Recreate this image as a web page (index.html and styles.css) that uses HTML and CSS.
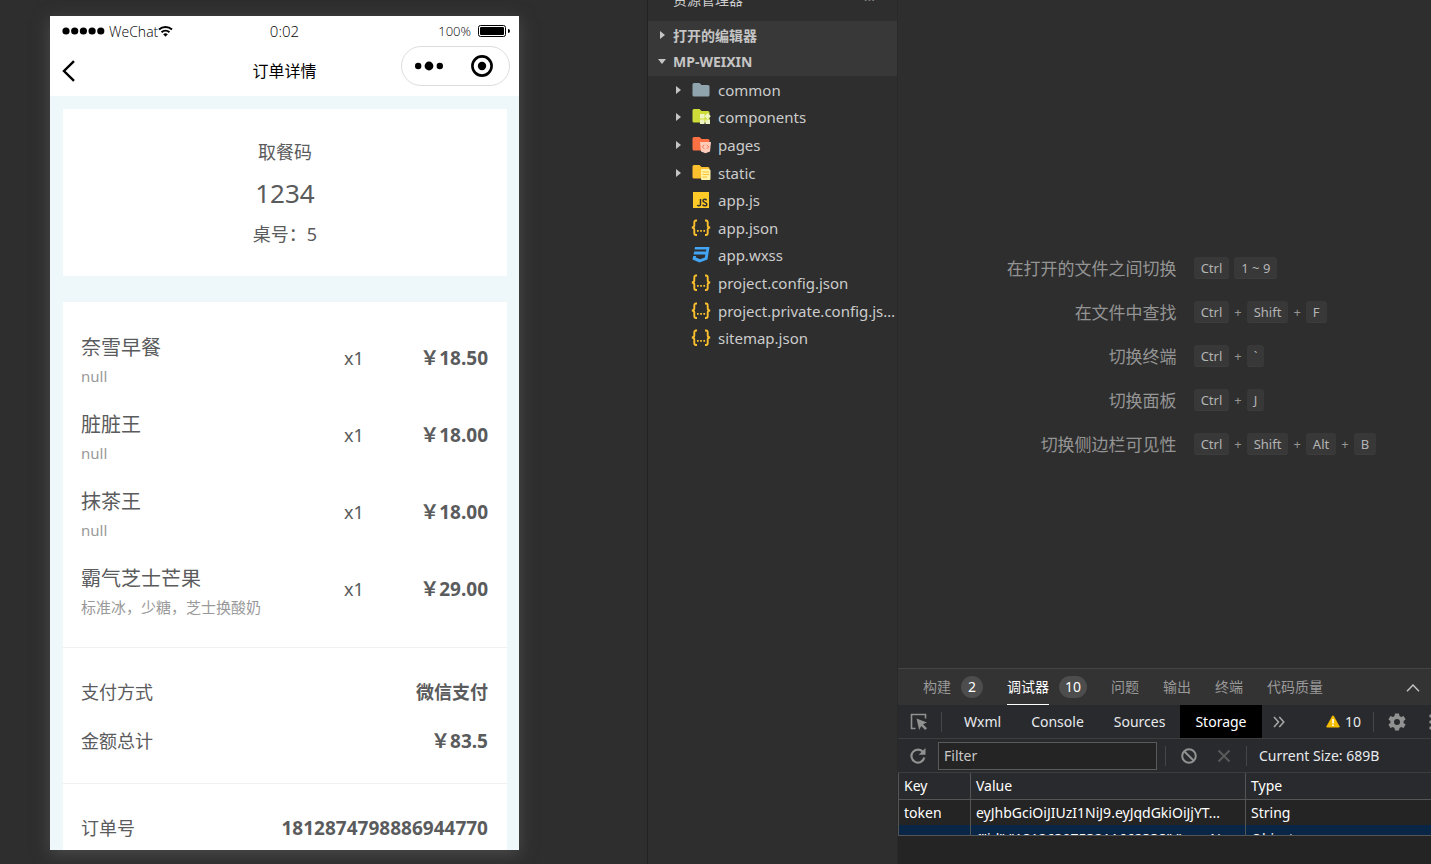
FILE: index.html
```html
<!DOCTYPE html>
<html lang="zh-CN">
<head>
    <meta charset="UTF-8">
    <meta name="viewport" content="width=device-width, initial-scale=1.0">
    <title>订单详情</title>
    <link rel="stylesheet" href="styles.css">
</head>
<body>
    <!-- 模拟器 -->
    <section class="simulator">
        <div class="phone">
            <div class="status-bar">
                <div class="carrier">
                    <svg class="signal" width="43" height="8" viewBox="0 0 43 8"><circle cx="4" cy="4" r="3.600"/><circle cx="12.700" cy="4" r="3.600"/><circle cx="21.400" cy="4" r="3.600"/><circle cx="30.100" cy="4" r="3.600"/><circle cx="38.800" cy="4" r="3.600"/></svg>
                    <span>WeChat</span>
                    <svg width="15" height="12" viewBox="0 0 15 12" fill="none" stroke="#000" stroke-width="2"><path d="M1 4.5a9.5 9.5 0 0 1 13 0M3.5 7.3a6 6 0 0 1 8 0"/><path d="M5.2 9.2a3.6 3.6 0 0 1 4.6 0L7.5 11.8z" fill="#000" stroke="none"/></svg>
                </div>
                <div class="clock">0:02</div>
                <div class="battery">
                    <span>100%</span>
                    <svg width="32" height="12" viewBox="0 0 32 12"><rect x=".5" y=".5" width="27" height="11" rx="2" fill="none" stroke="#000"/><rect x="2" y="2" width="24" height="8" rx="1"/><path d="M30 4q2 0 2 2t-2 2z"/></svg>
                </div>
            </div>
            <div class="nav-bar">
                <button class="back" aria-label="返回">
                    <svg width="14" height="22" viewBox="0 0 14 22" fill="none" stroke="#000" stroke-width="2.4"><path d="M12 1.2L2 11l10 9.8"/></svg>
                </button>
                <h1>订单详情</h1>
                <div class="capsule">
                    <button aria-label="更多">
                        <svg width="28" height="10" viewBox="0 0 28 10"><circle cx="3.2" cy="5" r="3.2"/><circle cx="14" cy="5" r="4.4"/><circle cx="24.8" cy="5" r="3.2"/></svg>
                    </button>
                    <button aria-label="关闭">
                        <svg width="22" height="22" viewBox="0 0 22 22"><circle cx="11" cy="11" r="9.6" fill="none" stroke="#000" stroke-width="2.6"/><circle cx="11" cy="11" r="4.2"/></svg>
                    </button>
                </div>
            </div>
            <div class="page">
                <div class="card pickup">
                    <p>取餐码</p>
                    <p class="code">1234</p>
                    <p>桌号：5</p>
                </div>
                <div class="card order">
                    <div class="group goods">
                        <div class="item">
                            <div><div class="name">奈雪早餐</div><div class="spec">null</div></div>
                            <span>x1</span><b class="num">￥18.50</b>
                        </div>
                        <div class="item">
                            <div><div class="name">脏脏王</div><div class="spec">null</div></div>
                            <span>x1</span><b class="num">￥18.00</b>
                        </div>
                        <div class="item">
                            <div><div class="name">抹茶王</div><div class="spec">null</div></div>
                            <span>x1</span><b class="num">￥18.00</b>
                        </div>
                        <div class="item">
                            <div><div class="name">霸气芝士芒果</div><div class="spec">标准冰，少糖，芝士换酸奶</div></div>
                            <span>x1</span><b class="num">￥29.00</b>
                        </div>
                    </div>
                    <div class="group">
                        <div class="row"><span>支付方式</span><b>微信支付</b></div>
                        <div class="row"><span>金额总计</span><b class="num">￥83.5</b></div>
                    </div>
                    <div class="group">
                        <div class="row"><span>订单号</span><b class="num">1812874798886944770</b></div>
                    </div>
                </div>
            </div>
        </div>
    </section>

    <!-- 资源管理器 -->
    <aside class="explorer">
        <div class="explorer-title"><span>资源管理器</span><span class="more">···</span></div>
        <div class="explorer-sections">
            <div class="section"><i class="arrow"></i>打开的编辑器</div>
            <div class="section"><i class="arrow open"></i>MP-WEIXIN</div>
        </div>
        <ul class="tree">
            <li><i class="arrow"></i><svg viewBox="0 0 20 18"><path d="M3 2h5.500l2 2H17q1.500 0 1.500 1.500V14q0 1.500-1.500 1.500H3Q1.500 15.500 1.500 14V3.500Q1.500 2 3 2z" fill="#90a4ae"/></svg><span>common</span></li>
            <li><i class="arrow"></i><svg viewBox="0 0 20 18"><path d="M3 1h5.500l2 2H17q1.500 0 1.500 1.500V13q0 1.500-1.500 1.500H3Q1.500 14.500 1.500 13V2.500Q1.500 1 3 1z" fill="#cddc39"/><path d="M9 6h4.500v4.500H9zM9 11.500h4.500V16H9zM14.500 11.500H19V16h-4.500zM16.700 5l3.100 3.200-3.100 3.100-3.100-3.100z" fill="#f0f4c3"/></svg><span>components</span></li>
            <li><i class="arrow"></i><svg viewBox="0 0 20 18"><path d="M3 1h5.500l2 2H17q1.500 0 1.500 1.500V13q0 1.500-1.500 1.500H3Q1.500 14.500 1.500 13V2.500Q1.500 1 3 1z" fill="#ff7043"/><path d="M9 6h11l-1 9.500-4.500 1.800L10 15.500z" fill="#ffccbc"/><path d="M13.300 8.800l-2 2 2 2M15.700 8.800l2 2-2 2" fill="none" stroke="#ff7043"/></svg><span>pages</span></li>
            <li><i class="arrow"></i><svg viewBox="0 0 20 18"><path d="M3 1h5.500l2 2H17q1.500 0 1.500 1.500V13q0 1.500-1.500 1.500H3Q1.500 14.500 1.500 13V2.500Q1.500 1 3 1z" fill="#fbc02d"/><path d="M11 5h7l1.500 1.500V15q0 1-1 1H11q-1 0-1-1V6q0-1 1-1z" fill="#fff3a8"/><path d="M11.500 8h6.500M11.500 10.500h6.500M11.500 13h4.500" stroke="#fbc02d"/></svg><span>static</span></li>
            <li><i class="arrow hidden"></i><svg viewBox="0 0 20 18"><path d="M2 1h16v16H2z" fill="#ffca28"/><path d="M9.500 8v5.200q0 1.600-1.500 1.600-1.100 0-1.600-1M15.500 9.300q-.5-1-1.800-1-1.700 0-1.700 1.500 0 1.100 1.800 1.600 2 .5 2 1.800 0 1.600-2 1.600-1.600 0-2.200-1.200" fill="none" stroke="#2e2e2e" stroke-width="1.500"/></svg><span>app.js</span></li>
            <li><i class="arrow hidden"></i><svg viewBox="0 0 20 18"><use href="#json"/></svg><span>app.json</span></li>
            <li><i class="arrow hidden"></i><svg viewBox="0 0 20 18"><path d="M4 1h14.500l-2 12.500L8.500 16.500 1.500 13.500l.7-3.500h3l-.3 1.600 4.200 1.700 4.700-1.700.6-3.100H2.600l.6-3H15l.3-2H3.500z" fill="#42a5f5"/></svg><span>app.wxss</span></li>
            <li><i class="arrow hidden"></i><svg viewBox="0 0 20 18"><use href="#json"/></svg><span>project.config.json</span></li>
            <li><i class="arrow hidden"></i><svg viewBox="0 0 20 18"><use href="#json"/></svg><span>project.private.config.json</span></li>
            <li><i class="arrow hidden"></i><svg viewBox="0 0 20 18"><use href="#json"/></svg><span>sitemap.json</span></li>
        </ul>
        <svg class="defs">
            <symbol id="json" viewBox="0 0 20 18"><path d="M6 1.500H5Q3.300 1.500 3.300 3.500V6.500Q3.300 8.500.8 8.500q2.500 0 2.500 2V14q0 2 1.700 2h1M14 1.500h1q1.700 0 1.700 2v3q0 2 2.500 2-2.500 0-2.500 2V14q0 2-1.700 2h-1" fill="none" stroke="#fbc02d" stroke-width="1.900"/><path d="M6 11h1.700v1.700H6zM9.200 11h1.700v1.700H9.200zM12.400 11h1.700v1.700h-1.700z" fill="#fbc02d"/></symbol>
        </svg>
    </aside>

    <!-- 编辑区 -->
    <main class="editor">
        <dl class="hints">
            <dt>在打开的文件之间切换</dt>
            <dd><kbd>Ctrl</kbd><kbd>1 ~ 9</kbd></dd>
            <dt>在文件中查找</dt>
            <dd><kbd>Ctrl</kbd>+<kbd>Shift</kbd>+<kbd>F</kbd></dd>
            <dt>切换终端</dt>
            <dd><kbd>Ctrl</kbd>+<kbd>`</kbd></dd>
            <dt>切换面板</dt>
            <dd><kbd>Ctrl</kbd>+<kbd>J</kbd></dd>
            <dt>切换侧边栏可见性</dt>
            <dd><kbd>Ctrl</kbd>+<kbd>Shift</kbd>+<kbd>Alt</kbd>+<kbd>B</kbd></dd>
        </dl>

        <section class="panel">
            <div class="panel-tabs">
                <button>构建</button><span class="badge">2</span>
                <button class="active">调试器</button><span class="badge">10</span>
                <button>问题</button>
                <button>输出</button>
                <button>终端</button>
                <button>代码质量</button>
                <button class="collapse" aria-label="收起">
                    <svg width="14" height="8" viewBox="0 0 14 8" fill="none" stroke="#c5c5c5" stroke-width="1.400"><path d="M1 7.300L7 1l6 6.300"/></svg>
                </button>
            </div>
            <div class="tool-tabs">
                <button class="icon inspect" aria-label="选择元素">
                    <svg width="18" height="18" viewBox="0 0 18 18"><path d="M5.500 15.500H1.500V1.500h14v4" fill="none" stroke="#919191" stroke-width="1.600"/><path d="M6.500 5.500l10.500 4-4 1.800 4 4-1.800 1.800-4-4-2 4z" fill="#919191"/></svg>
                </button>
                <i class="divider"></i>
                <button class="tab first">Wxml</button>
                <button class="tab">Console</button>
                <button class="tab">Sources</button>
                <button class="tab selected">Storage</button>
                <button class="icon chevrons" aria-label="更多面板">
                    <svg width="12" height="12" viewBox="0 0 12 12" fill="none" stroke="#aaa" stroke-width="1.500"><path d="M1 1l4.500 5L1 11M6.300 1l4.500 5-4.500 5"/></svg>
                </button>
                <div class="tool-right">
                    <svg width="14" height="13" viewBox="0 0 14 13"><path d="M7 .5q.6 0 1 .7l5.500 10q.4 1.300-.8 1.300H1.300Q.1 12.500.5 11.200L6 1.200Q6.400.5 7 .5z" fill="#f4bd00"/><path d="M6.200 4h1.600v4.500H6.200zM6.200 9.500h1.600v1.600H6.200z" fill="#fff"/></svg>
                    <span class="count">10</span>
                    <i class="divider"></i>
                    <button class="icon gear" aria-label="设置">
                        <svg width="18" height="18" viewBox="0 0 18 18"><path d="M7 .5h4l.5 2.500 1.700 1 2.400-.9 2 3.400-2 1.600v1.800l2 1.600-2 3.400-2.400-.9-1.700 1-.5 2.500H7L6.500 15l-1.700-1-2.400.9-2-3.400 2-1.600V8.100l-2-1.600 2-3.400 2.400.9 1.700-1zM9 6a3 3 0 1 0 0 6 3 3 0 0 0 0-6z" fill="#919191" fill-rule="evenodd"/></svg>
                    </button>
                    <svg width="2" height="16" viewBox="0 0 2 16" fill="#919191"><circle cx="2" cy="2" r="1.800"/><circle cx="2" cy="8" r="1.800"/><circle cx="2" cy="14" r="1.800"/></svg>
                </div>
            </div>
            <div class="filter-bar">
                <button class="icon" aria-label="刷新">
                    <svg width="16" height="16" viewBox="0 0 16 16"><path d="M13.200 4.200A6.500 6.500 0 1 0 14.300 9.500" fill="none" stroke="#919191" stroke-width="2.200"/><path d="M15.500 0v6.800H8.700z" fill="#919191"/></svg>
                </button>
                <input type="text" placeholder="Filter" aria-label="Filter">
                <i class="divider"></i>
                <div class="actions">
                    <button class="icon" aria-label="清空">
                        <svg width="16" height="16" viewBox="0 0 16 16" fill="none" stroke="#919191" stroke-width="2"><circle cx="8" cy="8" r="6.800"/><path d="M3.200 3.200l9.600 9.600"/></svg>
                    </button>
                    <button class="icon" aria-label="删除">
                        <svg width="14" height="14" viewBox="0 0 14 14" stroke="#5a5a5a" stroke-width="2"><path d="M1.500 1.500l11 11M12.500 1.500l-11 11"/></svg>
                    </button>
                </div>
                <i class="divider"></i>
                <span class="size">Current Size: 689B</span>
            </div>
            <div class="storage">
                <table>
                    <colgroup><col class="col-key"><col class="col-value"><col></colgroup>
                    <thead>
                        <tr><th>Key</th><th>Value</th><th>Type</th></tr>
                    </thead>
                    <tbody>
                        <tr><td>token</td><td>eyJhbGciOiJIUzI1NiJ9.eyJqdGkiOiJjYT...</td><td>String</td></tr>
                        <tr class="current"><td></td><td>{"id":"1812639753211662338","userN...</td><td>Object</td></tr>
                    </tbody>
                </table>
            </div>
        </section>
    </main>
</body>
</html>
```
FILE: styles.css
```css
:root {
    --bg: #2e2e2e;
    --devtools: #292a2d;
    --line: #3d3d3d;
    --text: #5a5b5c;
}

* {
    margin: 0;
    padding: 0;
    box-sizing: border-box;
}

body {
    display: flex;
    height: 100vh;
    overflow: hidden;
    background: var(--bg);
    color: #ccc;
    font-family: "Noto Sans", "Noto Sans CJK SC", sans-serif;
    font-size: 14px;
}

button {
    background: none;
    border: none;
    color: inherit;
    font: inherit;
    cursor: pointer;
}

svg {
    display: block;
    flex-shrink: 0;
}

/* 模拟器 */
.simulator {
    flex: 0 0 647px;
    padding: 16px 50px 14px;
}

.phone {
    display: flex;
    flex-direction: column;
    width: 469px;
    height: 100%;
    overflow: hidden;
    background: #fff;
    color: #000;
    box-shadow: 0 4px 16px #4c4c4c;
}

.status-bar {
    display: grid;
    grid-template-columns: 1fr auto 1fr;
    align-items: center;
    flex-shrink: 0;
    height: 30px;
    padding: 0 9px;
    font-family: "Open Sans", sans-serif;
    font-weight: 300;
}

.carrier,
.battery {
    display: flex;
    align-items: center;
}

.carrier {
    padding-left: 3px;
}

.signal {
    margin-right: 4px;
}

.clock {
    font-size: 15px;
}

.battery {
    justify-content: flex-end;
    gap: 7px;
    font-size: 13px;
}

.nav-bar {
    display: grid;
    grid-template-columns: 1fr auto 1fr;
    align-items: center;
    flex-shrink: 0;
    height: 50px;
    padding: 0 9px;
}

.nav-bar h1 {
    padding-bottom: 2px;
    font-size: 16px;
    font-weight: 400;
}

.back {
    justify-self: start;
    padding-left: 3px;
}

.capsule {
    display: flex;
    align-items: center;
    justify-content: space-between;
    align-self: start;
    justify-self: end;
    width: 109px;
    height: 40px;
    padding: 0 16px 0 13px;
    border: 1px solid #ddd;
    border-radius: 20px;
}

.page {
    flex: 1;
    padding: 13px 12px 0 13px;
    background: #eef7f9;
    color: var(--text);
    font-size: 18px;
}

.card {
    margin-bottom: 26px;
    background: #fff;
}

.pickup {
    padding: 23px 0 21px;
    text-align: center;
    line-height: 41px;
}

.pickup .code {
    font-size: 26px;
}

.group {
    display: flex;
    flex-direction: column;
    gap: 20px;
    padding: 30px 19px 27px 18px;
    border-bottom: 1px solid #f1f1f1;
}

.goods {
    padding-top: 31px;
    padding-bottom: 26px;
}

.item {
    display: grid;
    grid-template-columns: 1fr 44px 100px;
    line-height: 50px;
}

.item .name {
    font-size: 20px;
    line-height: 30px;
}

.item .spec {
    color: #999;
    font-size: 15px;
    line-height: 27px;
}

.item b {
    text-align: right;
}

.num {
    font-size: 19px;
}

.row {
    display: flex;
    justify-content: space-between;
    line-height: 29px;
}

/* 资源管理器 */
.explorer {
    flex: 0 0 251px;
    border-left: 1px solid #222;
    border-right: 1px solid #292929;
}

.explorer-title {
    display: flex;
    justify-content: space-between;
    height: 21px;
    padding: 0 22px 0 25px;
    line-height: 0;
}

.explorer-title .more {
    color: #888;
}

.explorer-sections {
    height: 55px;
    background: #383838;
    color: #c5c5c5;
    font-size: 14px;
    font-weight: 700;
}

.section {
    display: flex;
    align-items: center;
    gap: 5px;
    height: 27px;
    padding-left: 8px;
}

.arrow {
    display: flex;
    align-items: center;
    justify-content: center;
    flex: 0 0 12px;
    height: 12px;
}

.arrow::before {
    content: "";
    border: 4px solid transparent;
    border-left: 5px solid #c5c5c5;
    border-right: 0;
}

.arrow.open::before {
    border: 4px solid transparent;
    border-top: 5px solid #c5c5c5;
    border-bottom: 0;
}

.arrow.hidden {
    visibility: hidden;
}

.tree {
    display: grid;
    grid-auto-rows: 1fr;
    height: 276px;
    list-style: none;
    font-size: 15px;
}

.tree li {
    display: flex;
    align-items: center;
    min-width: 0;
    padding-left: 24px;
}

.tree svg {
    width: 20px;
    height: 18px;
    margin: 0 7px;
}

.tree span {
    overflow: hidden;
    white-space: nowrap;
    text-overflow: ellipsis;
}

.explorer .defs {
    width: 0;
    height: 0;
}

/* 编辑区 */
.editor {
    display: flex;
    flex-direction: column;
    flex: 1;
    min-width: 0;
}

.hints {
    display: grid;
    grid-template-columns: 54fr 46fr;
    grid-auto-rows: 44px;
    align-content: center;
    align-items: center;
    column-gap: 17px;
    flex: 1;
    padding-top: 44px;
    color: #949494;
}

.hints dt {
    padding-bottom: 2px;
    font-size: 17px;
    text-align: right;
}

.hints dd {
    display: flex;
    align-items: center;
    gap: 5px;
    font-size: 13px;
}

.hints kbd {
    padding: 0 7px;
    border-radius: 3px;
    background: #383838;
    box-shadow: inset 0 -1px 0 #3c3c3c;
    color: #b4b4b4;
    font-family: inherit;
    font-size: 13px;
    line-height: 22px;
}

.panel {
    height: 196px;
    border-top: 1px solid #444;
    background: #242424;
}

.panel-tabs {
    display: flex;
    align-items: center;
    height: 36px;
    padding: 0 11px 0 25px;
    background: #333;
    color: #999;
}

.panel-tabs button {
    height: 35px;
    margin-right: 24px;
    padding-bottom: 2px;
    border-bottom: 1px solid transparent;
    white-space: nowrap;
}

.panel-tabs .active {
    border-color: #fff;
    color: #fff;
}

.panel-tabs button:has(+ .badge) {
    margin-right: 10px;
}

.badge {
    min-width: 22px;
    margin-right: 24px;
    padding: 0 6px;
    border-radius: 11px;
    background: #4d4d4d;
    color: #fff;
    line-height: 22px;
    text-align: center;
}

.panel-tabs .collapse {
    margin: 4px 0 0 auto;
    border: none;
}

.tool-tabs,
.filter-bar {
    display: flex;
    align-items: center;
    height: 34px;
    background: var(--devtools);
    border-bottom: 1px solid var(--line);
    color: #e8eaed;
    white-space: nowrap;
}

.tool-tabs {
    overflow: hidden;
}

.icon {
    display: flex;
}

.inspect {
    margin: 0 13px 0 12px;
}

.divider {
    width: 1px;
    height: 20px;
    background: #454545;
}

.tab {
    height: 33px;
    padding: 0 15px;
}

.tab.first {
    margin-left: 7px;
}

.tab.selected {
    background: #000;
    color: #fff;
}

.chevrons {
    margin-left: 11px;
}

.tool-right {
    display: flex;
    align-items: center;
    margin-left: auto;
}

.count {
    margin: 0 12px 0 5px;
}

.gear {
    margin: 0 23px 0 14px;
}

.filter-bar {
    gap: 12px;
    padding-left: 12px;
}

.filter-bar input {
    width: 219px;
    height: 28px;
    margin-right: -4px;
    padding: 0 5px;
    border: 1px solid #5a5a5a;
    background: #242424;
    color: #ddd;
    font: inherit;
}

.filter-bar input::placeholder {
    color: #c8c8c8;
}

.actions {
    display: flex;
    align-items: center;
    gap: 20px;
    padding: 0 3px;
}

.storage {
    height: 63px;
    overflow: hidden;
    border-bottom: 1px solid #555;
}

table {
    width: 100%;
    table-layout: fixed;
    border-collapse: collapse;
    color: #fff;
}

.col-key {
    width: 72px;
}

.col-value {
    width: 275px;
}

th,
td {
    height: 26px;
    padding: 0 5px;
    border-left: 1px solid #555;
    overflow: hidden;
    font-weight: 400;
    line-height: 25px;
    text-align: left;
    text-overflow: ellipsis;
    white-space: nowrap;
}

th {
    border-bottom: 1px solid #555;
    background: var(--devtools);
}

.current {
    background: #0a2647;
}
```
